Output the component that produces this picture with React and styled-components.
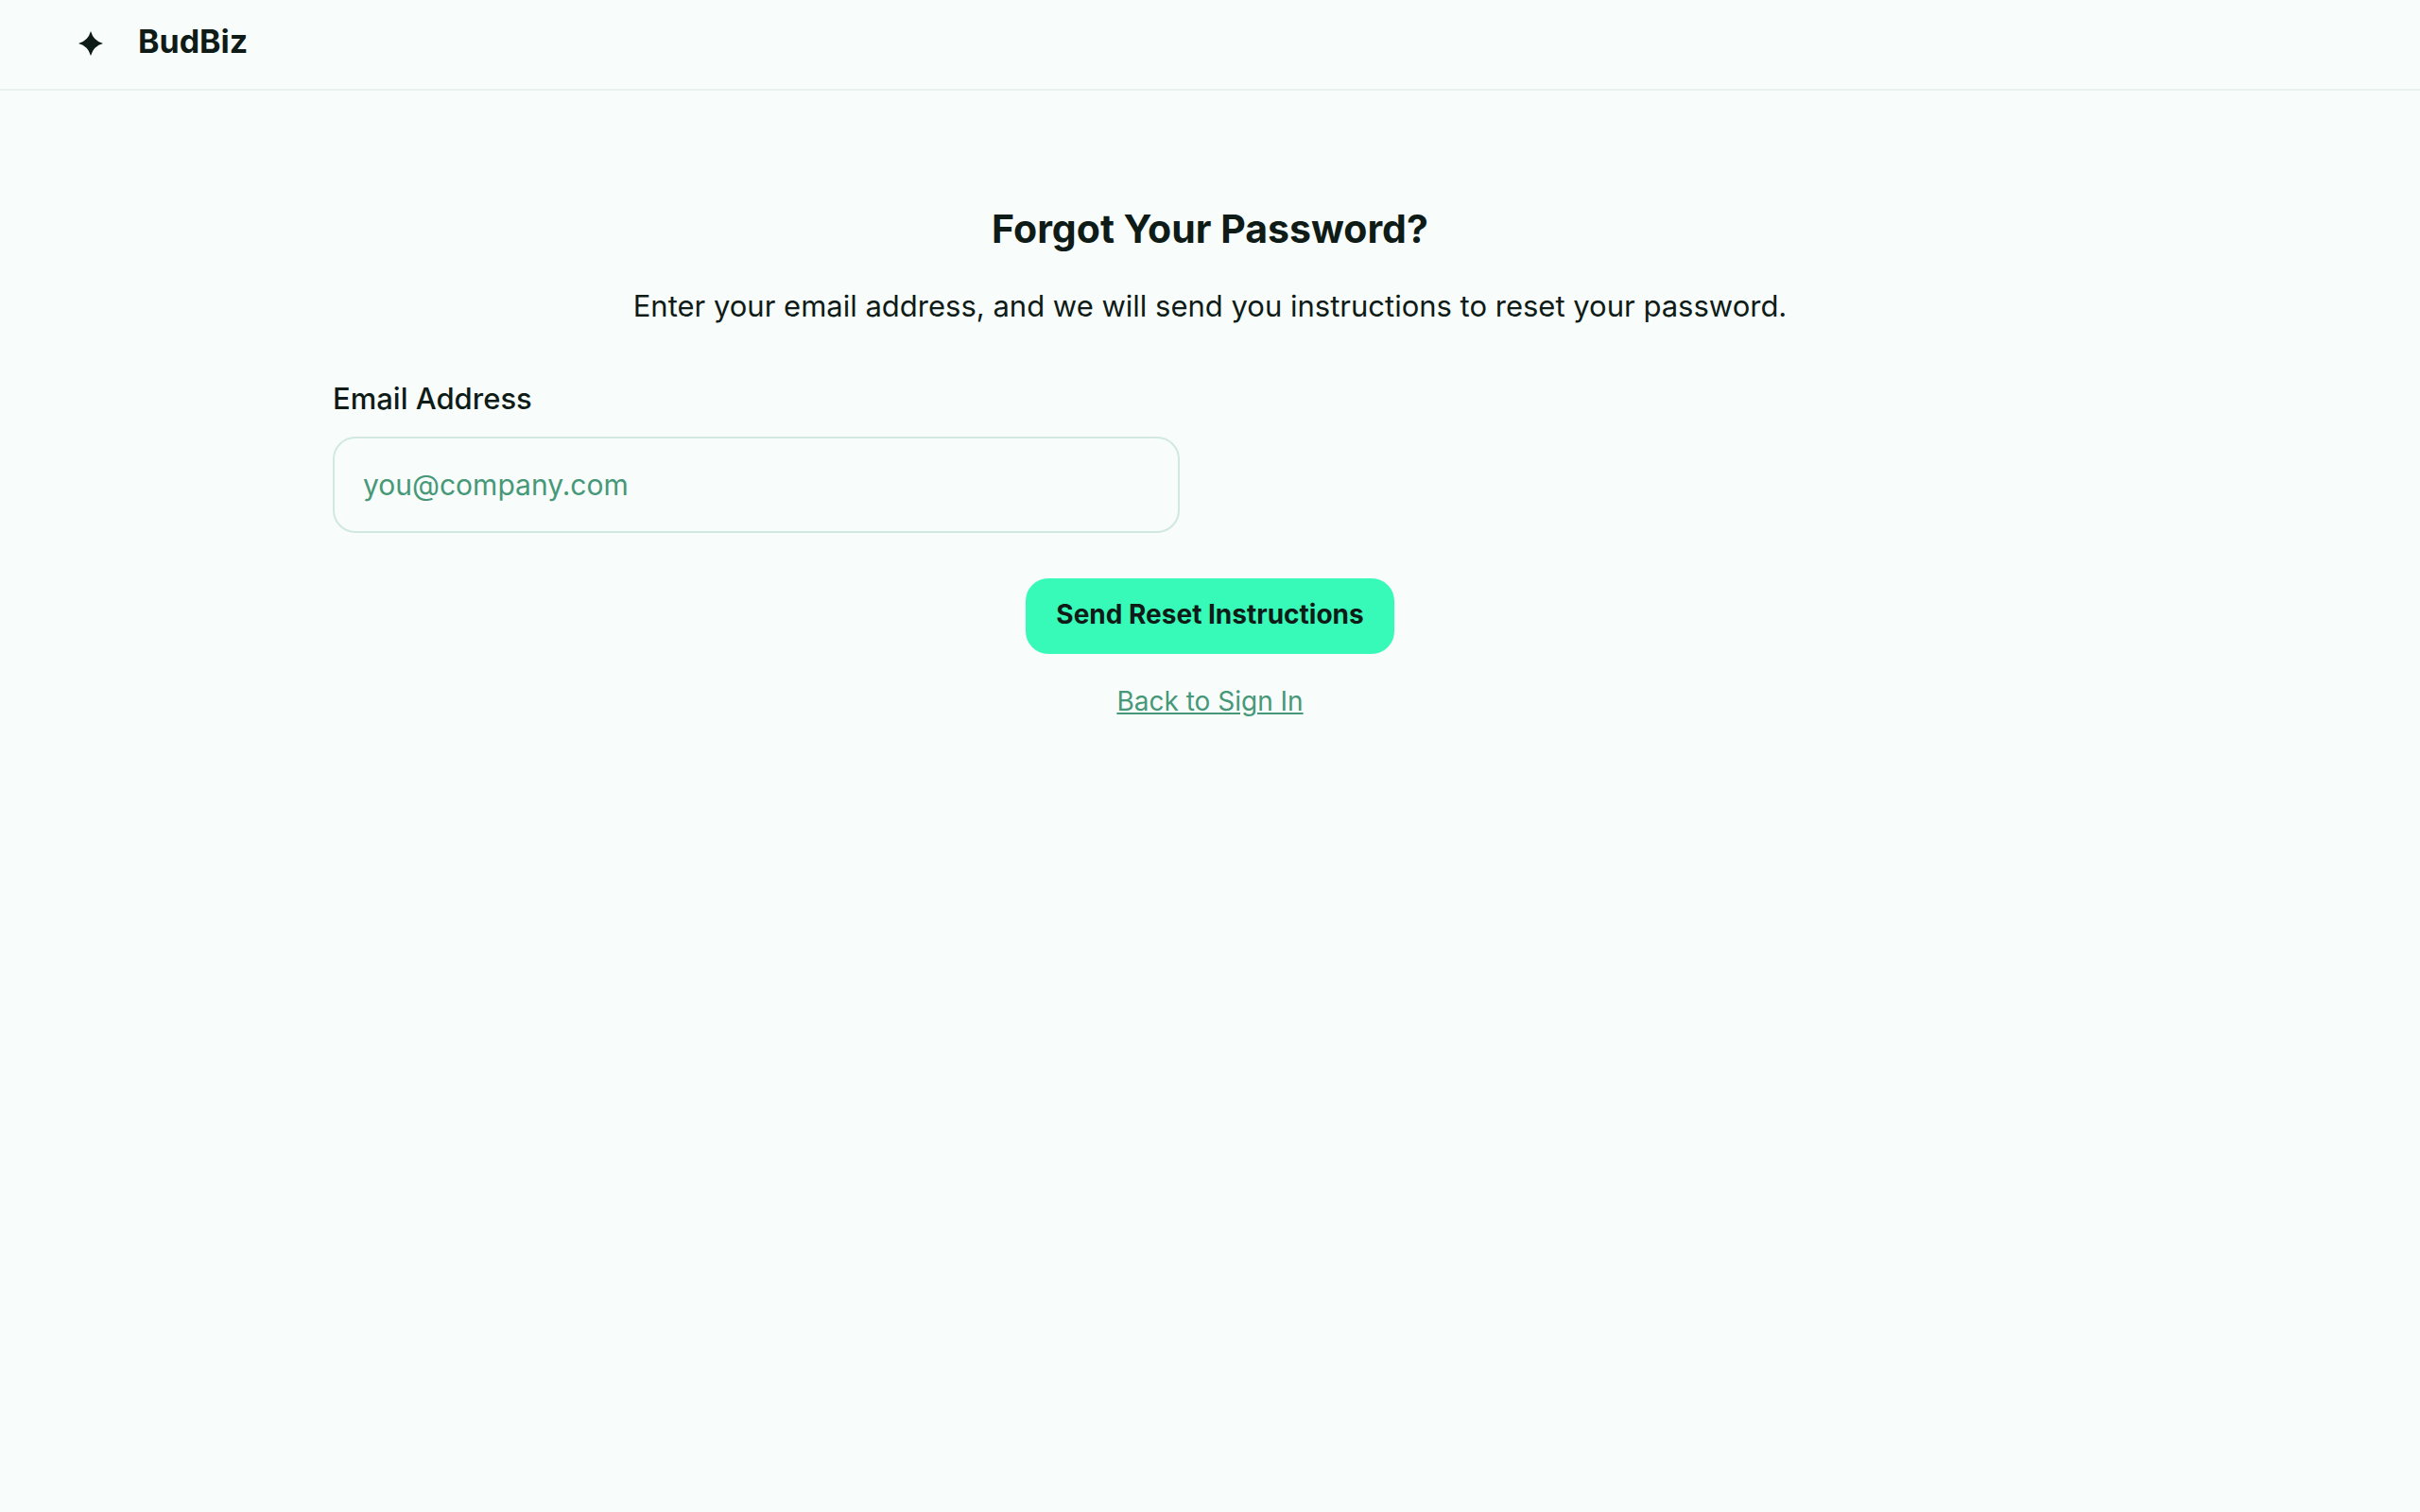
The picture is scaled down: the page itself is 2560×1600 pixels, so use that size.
import React from 'react';
import styled, { createGlobalStyle } from 'styled-components';

const colors = {
  page: '#f8fdfb',
  ink: '#0e1b17',
  muted: '#479878',
  line: '#d0e8df',
  rule: '#e9f2ef',
  accent: '#38fab8',
};

const GlobalStyle = createGlobalStyle`
  *, *::before, *::after { box-sizing: border-box; }
  body {
    margin: 0;
    background: ${colors.page};
    color: ${colors.ink};
    font-family: Inter, "Liberation Sans", sans-serif;
  }
`;

const Page = styled.div`
  display: flex;
  flex-direction: column;
  min-height: 100vh;
`;

const Header = styled.header`
  display: flex;
  align-items: center;
  gap: 34px;
  padding: 24px 80px;
  border-bottom: 2px solid ${colors.rule};
`;

const LogoMark = styled.svg`
  width: 32px;
  height: 32px;
  fill: currentColor;
`;

const Brand = styled.span`
  padding-bottom: 6px;
  font-size: 34px;
  font-weight: 700;
  line-height: 40px;
`;

const Main = styled.main`
  display: flex;
  flex-direction: column;
  width: 100%;
  max-width: 1920px;
  margin: 0 auto;
  padding: 120px 32px 40px;
`;

const Title = styled.h1`
  margin: 0 0 32px;
  font-size: 41px;
  font-weight: 700;
  line-height: 52px;
  text-align: center;
`;

const Intro = styled.p`
  margin: 0 0 50px;
  font-size: 31px;
  line-height: 48px;
  text-align: center;
`;

const Form = styled.form`
  display: flex;
  flex-direction: column;
  gap: 48px;
`;

const Field = styled.div`
  display: flex;
  flex-direction: column;
  gap: 16px;
  max-width: 896px;
`;

const Label = styled.label`
  font-size: 31px;
  font-weight: 500;
  line-height: 48px;
`;

const TextInput = styled.input`
  width: 100%;
  padding: 26px 30px;
  border: 2px solid ${colors.line};
  border-radius: 24px;
  outline: none;
  background: ${colors.page};
  color: ${colors.ink};
  font-family: inherit;
  font-size: 30px;
  line-height: 46px;

  &::placeholder {
    color: ${colors.muted};
    opacity: 1;
  }
`;

const SubmitButton = styled.button`
  align-self: center;
  padding: 18px 32px 22px;
  border: 0;
  border-radius: 24px;
  background: ${colors.accent};
  color: ${colors.ink};
  font-family: inherit;
  font-size: 28px;
  font-weight: 700;
  line-height: 40px;
  cursor: pointer;
`;

const BackLink = styled.a`
  align-self: center;
  margin-top: 30px;
  color: ${colors.muted};
  font-size: 28px;
  line-height: 40px;
`;

export default function App() {
  return (
    <Page>
      <GlobalStyle />
      <Header>
        <LogoMark viewBox="0 0 32 32" aria-hidden="true">
          <path d="M16 2 Q18.8 12.2 29 15 Q18.8 17.8 16 28 Q13.2 17.8 3 15 Q13.2 12.2 16 2 Z" />
        </LogoMark>
        <Brand>BudBiz</Brand>
      </Header>
      <Main>
        <Title>Forgot Your Password?</Title>
        <Intro>Enter your email address, and we will send you instructions to reset your password.</Intro>
        <Form onSubmit={(event) => event.preventDefault()}>
          <Field>
            <Label htmlFor="email">Email Address</Label>
            <TextInput id="email" type="email" placeholder="you@company.com" />
          </Field>
          <SubmitButton type="submit">Send Reset Instructions</SubmitButton>
        </Form>
        <BackLink href="#">Back to Sign In</BackLink>
      </Main>
    </Page>
  );
}
